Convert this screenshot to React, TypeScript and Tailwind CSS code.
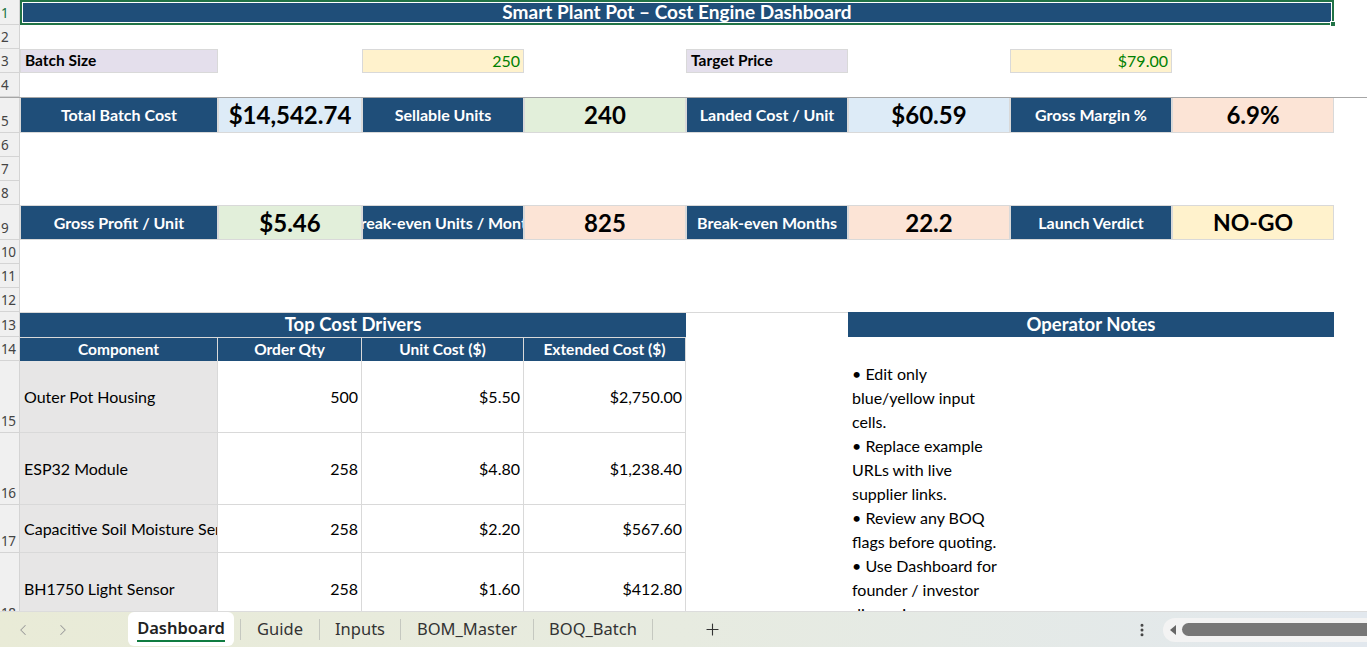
import React from "react";
import { ChevronLeft, ChevronRight, Plus, EllipsisVertical } from "lucide-react";

const BLUE = "bg-[#1f4e79]";

function RowNum({ n, row, green }: { n: number; row: string; green?: boolean }) {
  return (
    <div
      className={`${row} col-start-1 flex items-end justify-start overflow-hidden border-b border-r border-[#d4d4d4] bg-[#f0f0f0] pb-[1px] font-['Noto_Sans',sans-serif] text-[13.5px] leading-[20px] ${green ? "text-[#217346]" : "text-[#444]"}`}
    >
      <span className="shrink-0 pl-[1px] tracking-[-0.5px]">{n}</span>
    </div>
  );
}

export default function App() {
  const rowClasses = [
    "row-start-1",
    "row-start-2",
    "row-start-3",
    "row-start-4",
    "row-start-5",
    "row-start-6",
    "row-start-7",
    "row-start-8",
    "row-start-9",
    "row-start-10",
    "row-start-11",
    "row-start-12",
    "row-start-13",
    "row-start-14",
    "row-start-15",
    "row-start-16",
    "row-start-17",
    "row-start-18",
  ];

  const label = `${BLUE} flex items-center justify-center overflow-hidden whitespace-nowrap border border-[#d9d9d9] text-[16px] font-bold text-white`;
  const value = "flex items-center justify-center border border-[#d9d9d9] font-bold text-black";

  const tableRows = [
    { name: "Outer Pot Housing", qty: "500", unit: "$5.50", ext: "$2,750.00", row: "row-start-15" },
    { name: "ESP32 Module", qty: "258", unit: "$4.80", ext: "$1,238.40", row: "row-start-16" },
    { name: "Capacitive Soil Moisture Sensor", qty: "258", unit: "$2.20", ext: "$567.60", row: "row-start-17" },
    { name: "BH1750 Light Sensor", qty: "258", unit: "$1.60", ext: "$412.80", row: "row-start-18" },
  ];

  const body = "flex items-center overflow-hidden whitespace-nowrap border-b border-r border-[#d9d9d9] text-[16px] text-black";

  return (
    <div className="flex h-[647px] w-[1367px] flex-col overflow-hidden bg-white font-['Lato',sans-serif]">
      <div className="h-[611px] shrink-0 overflow-hidden">
        <div className="grid grid-cols-[20px_198px_144px_162px_162px_162px_162px_162px_162px_1fr] grid-rows-[25px_24px_24px_24px_36px_24px_24px_24px_35px_24px_24px_24px_25px_24px_72px_72px_48px_72px]">
          {rowClasses.map((r, i) => (
            <RowNum key={r} n={i + 1} row={r} green={i === 0} />
          ))}

          {/* Title */}
          <div className="relative col-span-8 col-start-2 row-start-1 border-2 border-[#217346]">
            <div className={`${BLUE} flex h-full items-center justify-center border border-white text-[19px] font-bold text-white`}>
              Smart Plant Pot – Cost Engine Dashboard
            </div>
            <div className="absolute -bottom-[4px] -right-[4px] h-[6px] w-[6px] border border-white bg-[#217346]" />
          </div>

          {/* Inputs row */}
          <div className="col-start-2 row-start-3 flex items-center border border-[#d9d9d9] bg-[#e4dfec] pl-[4px] text-[15.5px] font-bold text-black">
            Batch Size
          </div>
          <div className="col-start-4 row-start-3 flex items-center justify-end border border-[#d9d9d9] bg-[#fff2cc] pr-[3px] text-[16px] text-[#008000]">
            250
          </div>
          <div className="col-start-6 row-start-3 flex items-center border border-[#d9d9d9] bg-[#e4dfec] pl-[4px] text-[15.5px] font-bold text-black">
            Target Price
          </div>
          <div className="col-start-8 row-start-3 flex items-center justify-end border border-[#d9d9d9] bg-[#fff2cc] pr-[3px] text-[16px] text-[#008000]">
            $79.00
          </div>

          {/* KPI row 1 */}
          <div className={`col-start-2 row-start-5 ${label}`}>Total Batch Cost</div>
          <div className={`col-start-3 row-start-5 bg-[#ddebf7] text-[24px] ${value}`}>$14,542.74</div>
          <div className={`col-start-4 row-start-5 ${label}`}>Sellable Units</div>
          <div className={`col-start-5 row-start-5 bg-[#e2efda] text-[24px] ${value}`}>240</div>
          <div className={`col-start-6 row-start-5 ${label}`}>Landed Cost / Unit</div>
          <div className={`col-start-7 row-start-5 bg-[#ddebf7] text-[24px] ${value}`}>$60.59</div>
          <div className={`col-start-8 row-start-5 ${label}`}>Gross Margin %</div>
          <div className={`col-start-9 row-start-5 bg-[#fce4d6] text-[24px] ${value}`}>6.9%</div>

          {/* KPI row 2 */}
          <div className={`col-start-2 row-start-9 ${label}`}>Gross Profit / Unit</div>
          <div className={`col-start-3 row-start-9 bg-[#e2efda] text-[24px] ${value}`}>$5.46</div>
          <div className={`col-start-4 row-start-9 ${label}`}>Break-even Units / Month</div>
          <div className={`col-start-5 row-start-9 bg-[#fce4d6] text-[24px] ${value}`}>825</div>
          <div className={`col-start-6 row-start-9 ${label}`}>Break-even Months</div>
          <div className={`col-start-7 row-start-9 bg-[#fce4d6] text-[24px] ${value}`}>22.2</div>
          <div className={`col-start-8 row-start-9 ${label}`}>Launch Verdict</div>
          <div className={`col-start-9 row-start-9 bg-[#fff2cc] text-[23px] ${value}`}>NO-GO</div>

          {/* Top cost drivers */}
          <div className={`${BLUE} col-span-4 col-start-2 row-start-13 flex items-center justify-center border-t border-[#d9d9d9] text-[18.5px] font-bold text-white`}>
            Top Cost Drivers
          </div>
          {["Component", "Order Qty", "Unit Cost ($)", "Extended Cost ($)"].map((h, i) => (
            <div
              key={h}
              className={`${BLUE} row-start-14 ${["col-start-2", "col-start-3", "col-start-4", "col-start-5"][i]} flex items-center justify-center border-r border-t border-[#d9d9d9] text-[15.5px] font-bold text-white`}
            >
              {h}
            </div>
          ))}
          {tableRows.map((r) => (
            <React.Fragment key={r.name}>
              <div className={`col-start-2 ${r.row} ${body} bg-[#e7e6e6] pl-[4px]`}>{r.name}</div>
              <div className={`col-start-3 ${r.row} ${body} justify-end pr-[3px]`}>{r.qty}</div>
              <div className={`col-start-4 ${r.row} ${body} justify-end pr-[3px]`}>{r.unit}</div>
              <div className={`col-start-5 ${r.row} ${body} justify-end pr-[3px]`}>{r.ext}</div>
            </React.Fragment>
          ))}

          {/* Operator notes */}
          <div className="col-start-6 row-start-13 border-t border-[#d9d9d9]" />
          <div className={`${BLUE} col-span-3 col-start-7 row-start-13 flex items-center justify-center text-[18.5px] font-bold text-white`}>
            Operator Notes
          </div>
          <div className="col-start-7 row-span-4 row-start-15 pl-[4px] pt-[1px] text-[16px] leading-[24px] text-black">
            • Edit only blue/yellow input cells.
            <br />• Replace example URLs with live supplier links.
            <br />• Review any BOQ flags before quoting.
            <br />• Use Dashboard for founder / investor discussions.
          </div>

          {/* freeze pane line */}
          <div className="z-10 col-span-10 col-start-1 row-start-5 h-px self-start bg-[#a6a6a6]" />
        </div>
      </div>

      {/* Sheet tab bar */}
      <div className="flex h-[36px] shrink-0 items-stretch border-t border-[#dcdcdc] bg-linear-to-r from-[#e9ebd7] via-[#e7ebe0] to-[#e2e8ee] font-['Noto_Sans',sans-serif] text-[16.5px] text-[#333]">
        <div className="flex w-[128px] items-center gap-[22px] pl-[14px]">
          <ChevronLeft size={18} strokeWidth={1.4} className="text-[#9a9a9a]" />
          <ChevronRight size={18} strokeWidth={1.4} className="text-[#9a9a9a]" />
        </div>
        <div className="relative mb-[1px] flex w-[106px] items-center justify-center rounded-[6px] bg-white font-semibold text-[#222]">
          <span className="border-b-2 border-[#107c41] pb-[1px] leading-[22px]">Dashboard</span>
        </div>
        <div className="w-[6px]" />
        <div className="my-[7px] w-px bg-[#c5c8c0]" />
        <div className="flex w-[78px] items-center justify-center">Guide</div>
        <div className="my-[7px] w-px bg-[#c5c8c0]" />
        <div className="flex w-[80px] items-center justify-center">Inputs</div>
        <div className="my-[7px] w-px bg-[#c5c8c0]" />
        <div className="flex w-[132px] items-center justify-center">BOM_Master</div>
        <div className="my-[7px] w-px bg-[#c5c8c0]" />
        <div className="flex w-[118px] items-center justify-center">BOQ_Batch</div>
        <div className="my-[7px] w-px bg-[#c5c8c0]" />
        <div className="flex w-[119px] items-center justify-center">
          <Plus size={19} strokeWidth={1.4} className="text-[#333]" />
        </div>
        <div className="flex-1" />
        <div className="flex w-[20px] items-center justify-center">
          <EllipsisVertical size={16} strokeWidth={2.5} className="text-[#444]" />
        </div>
        <div className="ml-[11px] flex h-[24px] w-[204px] items-center self-center rounded-l-full bg-[#f3f3f3] pl-[7px]">
          <div className="h-0 w-0 border-y-[5px] border-r-[6px] border-y-transparent border-r-[#666]" />
          <div className="ml-[6px] h-[13px] flex-1 rounded-l-full bg-[#777]" />
        </div>
      </div>
    </div>
  );
}
